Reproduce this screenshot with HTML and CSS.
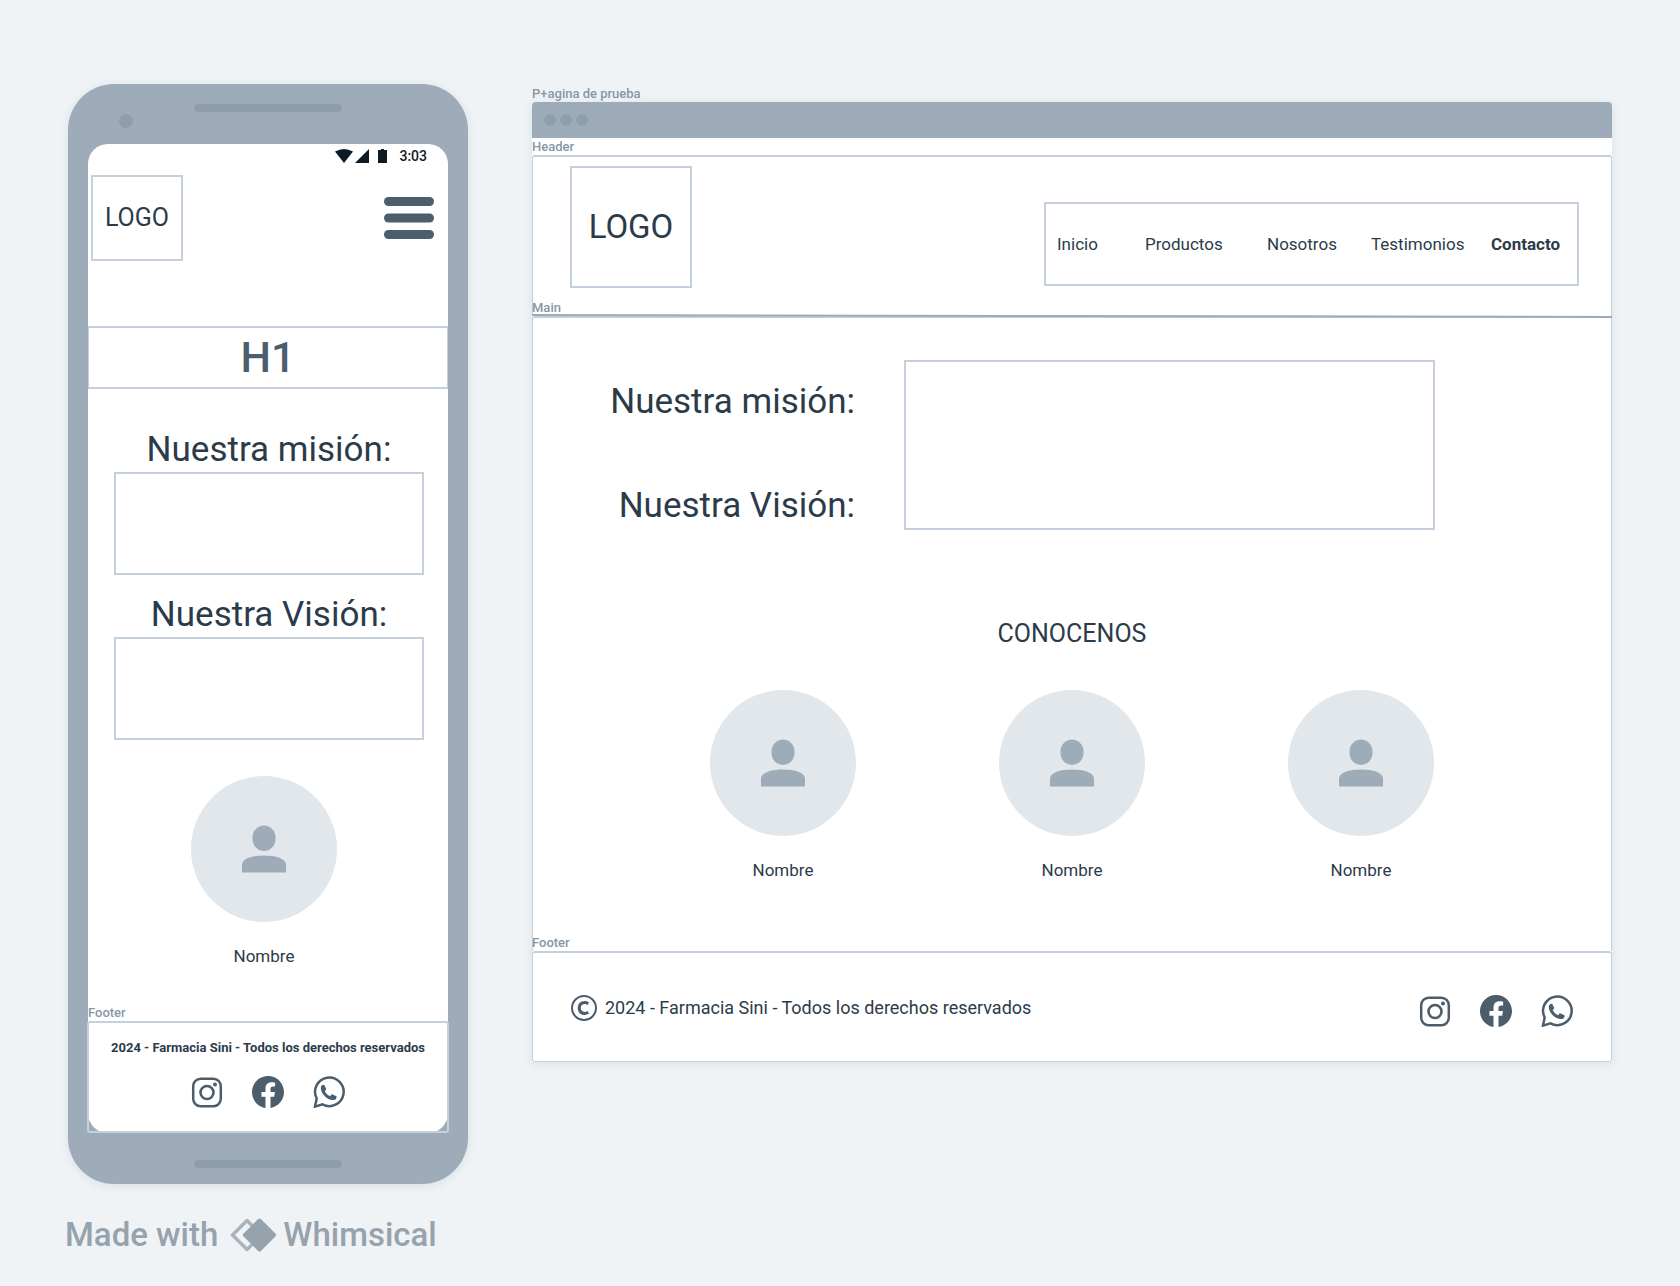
FILE: index.html
```html
<!DOCTYPE html>
<html lang="es">
<head>
<meta charset="utf-8">
<meta name="viewport" content="width=device-width, initial-scale=1">
<title>Farmacia Sini</title>
<link rel="stylesheet" href="styles.css">
</head>
<body>
<svg class="symbols" aria-hidden="true">
  <symbol id="person" viewBox="0 0 44 48">
    <rect x="10.5" y="0.5" width="23" height="25.5" rx="11.5" ry="12"/>
    <path d="M0 47.5V40c0-6.5 10-9.500 22-9.500s22 3 22 9.500v7.500z"/>
  </symbol>
  <symbol id="instagram" viewBox="0 0 32 32">
    <rect x="2.200" y="2.700" width="27.600" height="27.600" rx="7.500" fill="none" stroke="currentColor" stroke-width="2.500"/>
    <circle cx="16" cy="16.500" r="6.500" fill="none" stroke="currentColor" stroke-width="2.600"/>
    <circle cx="24" cy="8.500" r="2"/>
  </symbol>
  <symbol id="facebook" viewBox="0 0 16 16">
    <path d="M16 8.049c0-4.446-3.582-8.050-8-8.050C3.580 0-.002 3.603-.002 8.050c0 4.017 2.926 7.347 6.750 7.951v-5.625h-2.030V8.050H6.750V6.275c0-2.017 1.195-3.131 3.022-3.131.876 0 1.791.157 1.791.157v1.980h-1.009c-.993 0-1.303.621-1.303 1.258v1.510h2.218l-.354 2.326H9.250V16c3.824-.604 6.750-3.934 6.750-7.951z"/>
  </symbol>
  <symbol id="whatsapp" viewBox="0 0 32 32">
    <path d="M2 30.600L3.700 22.500A14.300 14.300 0 1 1 9.500 28.400Z" fill="none" stroke="currentColor" stroke-width="2.500"/>
    <path d="M7.800 12c0-1.800 1.200-3 2.600-3.200.7 0 1 .3 1.200.8l1.500 3.100c.2.500 0 .9-.4 1.300l-.9 1.200c1.200 2.300 2.900 3.900 5.300 5l1.200-1.500c.3-.4.8-.5 1.200-.3l3.500 1.600c.5.3.7.6.6 1.200-.3 1.900-1.800 2.900-3.600 2.900C14 24 7.800 17.600 7.800 12z"/>
  </symbol>
</svg>

<div class="board">
  <div class="board-phone">
    <article class="phone">
      <div class="phone-top">
        <span class="camera"></span>
        <span class="speaker"></span>
      </div>
      <div class="screen">
        <div class="status">
          <svg width="52" height="14" viewBox="0 0 52 14" aria-hidden="true">
            <path d="M0 2.600Q9-2.400 18 2.600L9 14z"/>
            <path d="M34 0v14H20z"/>
            <path d="M43 1h3V0h3v1h3v13h-9z"/>
          </svg>
          <span>3:03</span>
        </div>
        <header class="phone-header">
          <div class="logo logo-small">LOGO</div>
          <button class="menu" type="button" aria-label="Menú">
            <svg width="50" height="42" viewBox="0 0 50 42" aria-hidden="true">
              <rect width="50" height="9" rx="4.500"/>
              <rect y="16.500" width="50" height="9" rx="4.500"/>
              <rect y="33" width="50" height="9" rx="4.500"/>
            </svg>
          </button>
        </header>
        <h1 class="banner">H1</h1>
        <section class="statement">
          <h2 class="title">Nuestra misión:</h2>
          <div class="box"></div>
        </section>
        <section class="statement statement-next">
          <h2 class="title">Nuestra Visión:</h2>
          <div class="box"></div>
        </section>
        <figure class="member phone-member">
          <span class="avatar"><svg width="44" height="48"><use href="#person"/></svg></span>
          <figcaption>Nombre</figcaption>
        </figure>
        <div class="label">Footer</div>
        <footer class="phone-footer">
          <p>2024 - Farmacia Sini - Todos los derechos reservados</p>
          <div class="social">
            <a href="#instagram" aria-label="Instagram"><svg><use href="#instagram"/></svg></a>
            <a href="#facebook" aria-label="Facebook"><svg><use href="#facebook"/></svg></a>
            <a href="#whatsapp" aria-label="WhatsApp"><svg><use href="#whatsapp"/></svg></a>
          </div>
        </footer>
      </div>
      <span class="speaker speaker-bottom"></span>
    </article>
    <div class="credit">
      <span>Made with</span>
      <svg width="46" height="34" viewBox="0 0 46 34" aria-hidden="true">
        <path d="M17 2.500L2.500 17L17 31.500L31.500 17Z" fill="none" stroke="#a8b3bc" stroke-width="3.500" stroke-linejoin="round"/>
        <path d="M29.500 2.500L15 17L29.500 31.500L44 17Z" fill="#96a2ac" stroke="#96a2ac" stroke-width="4" stroke-linejoin="round"/>
      </svg>
      <span>Whimsical</span>
    </div>
  </div>

  <div class="board-web">
    <div class="label">P+agina de prueba</div>
    <article class="window">
      <div class="window-bar"><i></i><i></i><i></i></div>
      <div class="label">Header</div>
      <header class="site-header">
        <div class="header-row">
          <div class="logo">LOGO</div>
          <nav class="nav">
            <a href="#inicio">Inicio</a>
            <a href="#productos">Productos</a>
            <a href="#nosotros">Nosotros</a>
            <a href="#testimonios">Testimonios</a>
            <a class="strong" href="#contacto">Contacto</a>
          </nav>
        </div>
        <div class="label label-inset">Main</div>
      </header>
      <svg class="divider" viewBox="0 0 1080 4" preserveAspectRatio="none" aria-hidden="true">
        <path d="M0 1L1080 3" stroke="#9eacb9" stroke-width="2"/>
      </svg>
      <main class="site-main">
        <section class="mission">
          <div class="mission-titles">
            <h2 class="title">Nuestra misión:</h2>
            <h2 class="title">Nuestra Visión:</h2>
          </div>
          <div class="box box-tall"></div>
        </section>
        <h2 class="team-title">CONOCENOS</h2>
        <section class="team">
          <figure class="member">
            <span class="avatar"><svg width="44" height="48"><use href="#person"/></svg></span>
            <figcaption>Nombre</figcaption>
          </figure>
          <figure class="member">
            <span class="avatar"><svg width="44" height="48"><use href="#person"/></svg></span>
            <figcaption>Nombre</figcaption>
          </figure>
          <figure class="member">
            <span class="avatar"><svg width="44" height="48"><use href="#person"/></svg></span>
            <figcaption>Nombre</figcaption>
          </figure>
        </section>
        <div class="label label-inset">Footer</div>
      </main>
      <footer class="site-footer">
        <p class="copyright">
          <svg width="26" height="26" viewBox="0 0 26 26" aria-hidden="true">
            <circle cx="13" cy="13" r="12" fill="none" stroke="currentColor" stroke-width="2"/>
            <path d="M17.300 8.700C13.500 6.300 8.200 7.800 8.200 13s5.300 6.700 9.100 4.300" fill="none" stroke="currentColor" stroke-width="3"/>
          </svg>
          <span>2024 - Farmacia Sini - Todos los derechos reservados</span>
        </p>
        <div class="social">
          <a href="#instagram" aria-label="Instagram"><svg><use href="#instagram"/></svg></a>
          <a href="#facebook" aria-label="Facebook"><svg><use href="#facebook"/></svg></a>
          <a href="#whatsapp" aria-label="WhatsApp"><svg><use href="#whatsapp"/></svg></a>
        </div>
      </footer>
    </article>
  </div>
</div>
</body>
</html>
```
FILE: styles.css
```css
:root {
  --canvas: #eff3f6;
  --slate: #9eacb9;
  --slate-dark: #8f9eac;
  --line: #c4d0db;
  --text: #2c3b49;
  --icon: #4c5d6b;
  --muted: #8797a5;
}

* {
  box-sizing: border-box;
}

body {
  margin: 0;
  background: var(--canvas);
  color: var(--text);
  font-family: Roboto, "Liberation Sans", sans-serif;
  font-size: 18px;
  line-height: 24px;
}

h1,
h2,
p,
figure {
  margin: 0;
}

h2 {
  font-weight: 400;
}

svg {
  display: block;
  fill: currentColor;
}

.symbols {
  position: absolute;
  width: 0;
  height: 0;
}

.board {
  display: grid;
  grid-template-columns: 400px minmax(0, 1fr);
  column-gap: 64px;
  align-items: start;
  padding: 84px 68px 30px;
}

.label {
  color: var(--muted);
  font-size: 13px;
  font-weight: 500;
  line-height: 16px;
}

.label-inset {
  margin-left: -1px;
}

.logo {
  display: flex;
  align-items: center;
  justify-content: center;
  width: 122px;
  height: 122px;
  border: 2px solid var(--line);
  font-size: 33px;
}

.logo-small {
  width: 92px;
  height: 86px;
  font-size: 25px;
}

.title {
  font-size: 35px;
  line-height: 44px;
}

.box {
  height: 103px;
  border: 2px solid var(--line);
}

.box-tall {
  height: 170px;
}

.member {
  display: flex;
  flex-direction: column;
  align-items: center;
  gap: 22px;
  font-size: 17px;
}

.avatar {
  display: flex;
  align-items: center;
  justify-content: center;
  width: 146px;
  height: 146px;
  border-radius: 50%;
  background: #e2e7eb;
  color: var(--slate);
}

.social {
  display: flex;
  justify-content: center;
  gap: 29px;
}

.social a {
  color: var(--icon);
}

.social svg {
  width: 32px;
  height: 32px;
}

/* Phone */

.phone {
  padding: 0 20px 16px;
  border-radius: 46px;
  background: var(--slate);
  box-shadow: 0 2px 10px rgba(44, 59, 73, 0.1);
}

.phone-top {
  display: grid;
  grid-template-columns: 1fr 148px 1fr;
  height: 60px;
}

.camera {
  width: 14px;
  height: 14px;
  margin: 30px 0 0 31px;
  border-radius: 50%;
  background: var(--slate-dark);
}

.speaker {
  width: 148px;
  height: 8px;
  margin-top: 20px;
  border-radius: 4px;
  background: var(--slate-dark);
}

.speaker-bottom {
  display: block;
  margin: 29px auto 0;
}

.screen {
  border-radius: 20px;
  background: #fff;
}

.status {
  display: flex;
  align-items: center;
  justify-content: flex-end;
  gap: 12px;
  height: 24px;
  padding-right: 21px;
  color: #101a22;
  font-size: 14px;
  font-weight: 500;
}

.phone-header {
  display: flex;
  align-items: center;
  justify-content: space-between;
  padding: 7px 14px 0 3px;
}

.menu {
  padding: 0;
  border: 0;
  background: none;
  color: var(--icon);
}

.banner {
  margin-top: 65px;
  border: 1px solid var(--line);
  border-width: 2px 1px;
  color: var(--icon);
  font-size: 43px;
  font-weight: 500;
  line-height: 59px;
  text-align: center;
}

.statement {
  padding: 39px 24px 0 26px;
  text-align: center;
}

.statement-next {
  padding-top: 18px;
}

.phone-member {
  padding: 36px 8px 37px 0;
}

.phone-footer {
  margin: 0 -1px -2px;
  padding: 17px 0 23px;
  border: 2px solid var(--line);
  border-radius: 3px;
}

.phone-footer p {
  margin-bottom: 20px;
  font-size: 13px;
  font-weight: 700;
  line-height: 16px;
  text-align: center;
}

.credit {
  display: flex;
  align-items: center;
  margin: 31px 0 0 -3px;
  color: #96a2ac;
  font-size: 33px;
  font-weight: 500;
  line-height: 40px;
}

.credit svg {
  margin: 0 7px 0 12px;
}

/* Browser window */

.board-web {
  padding-top: 2px;
}

.window {
  border-radius: 4px 4px 0 0;
  background: #fff;
  box-shadow: 0 2px 10px rgba(44, 59, 73, 0.1);
}

.window-bar {
  display: flex;
  align-items: center;
  gap: 4px;
  height: 36px;
  margin-bottom: 1px;
  padding-left: 12px;
  border-radius: 4px 4px 0 0;
  background: var(--slate);
}

.window-bar i {
  width: 12px;
  height: 12px;
  border-radius: 50%;
  background: var(--slate-dark);
}

.site-header,
.site-main,
.site-footer {
  border: 1px solid var(--line);
  border-top-width: 2px;
  border-radius: 3px;
}

.site-header,
.site-main {
  border-bottom: 0;
  border-radius: 3px 3px 0 0;
}

.header-row {
  display: flex;
  align-items: flex-end;
  justify-content: space-between;
  padding: 9px 32px 12px 37px;
}

.nav {
  display: grid;
  flex: 0 1 535px;
  grid-template-columns: 88fr 122fr 104fr 120fr 75fr;
  margin-bottom: 2px;
  padding: 28px 11px;
  border: 2px solid var(--line);
  font-size: 17px;
}

.nav a {
  color: inherit;
  text-decoration: none;
}

.nav .strong {
  font-weight: 700;
}

.divider {
  position: relative;
  width: 100%;
  height: 4px;
  margin: -2px 0;
}

.mission {
  display: grid;
  grid-template-columns: 322fr 531fr;
  column-gap: 49px;
  padding: 42px 176px 0 0;
}

.mission-titles {
  display: flex;
  flex-direction: column;
  gap: 60px;
  padding-top: 20px;
  text-align: right;
}

.team-title {
  margin: 88px 0 40px;
  font-size: 25px;
  line-height: 32px;
  text-align: center;
}

.team {
  display: flex;
  justify-content: space-between;
  padding: 0 177px 53px;
}

.site-footer {
  display: flex;
  align-items: flex-start;
  justify-content: space-between;
  padding: 42px 38px 34px;
}

.copyright {
  display: flex;
  align-items: center;
  gap: 8px;
}

.copyright svg {
  color: var(--icon);
}
```
